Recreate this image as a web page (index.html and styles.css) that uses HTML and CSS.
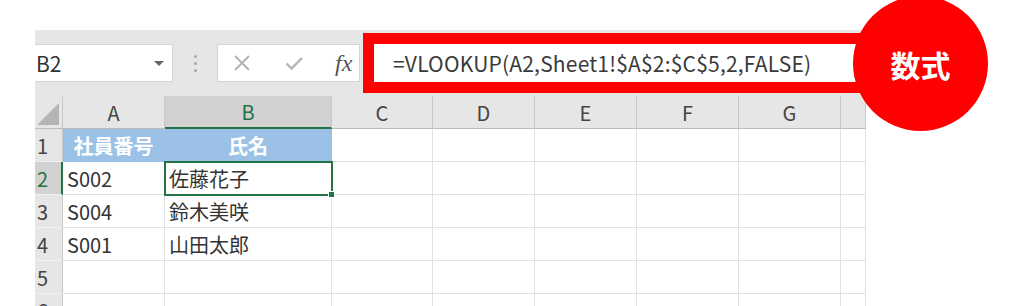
FILE: index.html
```html
<!DOCTYPE html>
<html lang="ja">
<head>
  <meta charset="UTF-8">
  <title>VLOOKUP 数式</title>
  <link rel="stylesheet" href="styles.css">
</head>
<body>
  <div class="sheet">
    <div class="toolbar">
      <div class="namebox">
        <span>B2</span>
        <span class="caret"></span>
      </div>
      <div class="grip"><i></i><i></i><i></i></div>
      <div class="buttons">
        <svg width="18" height="18" viewBox="0 0 18 18"><path d="M2 2L16 16M16 2L2 16" stroke="#b3b3b3" stroke-width="2" fill="none"/></svg>
        <svg width="18" height="18" viewBox="0 0 18 18"><path d="M1.5 9.5L6.5 14.5L17 4" stroke="#b3b3b3" stroke-width="2.4" fill="none"/></svg>
        <span class="fx">fx</span>
      </div>
      <div class="formula">=VLOOKUP(A2,Sheet1!$A$2:$C$5,2,FALSE)</div>
    </div>

    <div class="grid">
      <div class="corner"><span class="tri"></span></div>
      <div class="col">A</div>
      <div class="col active">B</div>
      <div class="col">C</div>
      <div class="col">D</div>
      <div class="col">E</div>
      <div class="col">F</div>
      <div class="col">G</div>
      <div class="col"></div>

      <div class="row">1</div>
      <div class="cell head">社員番号</div>
      <div class="cell head">氏名</div>
      <div class="cell"></div><div class="cell"></div><div class="cell"></div><div class="cell"></div><div class="cell"></div><div class="cell"></div>

      <div class="row active">2</div>
      <div class="cell">S002</div>
      <div class="cell selected">佐藤花子<span class="handle"></span></div>
      <div class="cell"></div><div class="cell"></div><div class="cell"></div><div class="cell"></div><div class="cell"></div><div class="cell"></div>

      <div class="row">3</div>
      <div class="cell">S004</div>
      <div class="cell">鈴木美咲</div>
      <div class="cell"></div><div class="cell"></div><div class="cell"></div><div class="cell"></div><div class="cell"></div><div class="cell"></div>

      <div class="row">4</div>
      <div class="cell">S001</div>
      <div class="cell">山田太郎</div>
      <div class="cell"></div><div class="cell"></div><div class="cell"></div><div class="cell"></div><div class="cell"></div><div class="cell"></div>

      <div class="row">5</div>
      <div class="cell"></div><div class="cell"></div><div class="cell"></div><div class="cell"></div><div class="cell"></div><div class="cell"></div><div class="cell"></div><div class="cell"></div>

      <div class="row">6</div>
      <div class="cell"></div><div class="cell"></div><div class="cell"></div><div class="cell"></div><div class="cell"></div><div class="cell"></div><div class="cell"></div><div class="cell"></div>
    </div>

    <div class="badge">数式</div>
  </div>
</body>
</html>
```

FILE: styles.css
```css
:root {
  --panel: #e6e6e6;
  --line: #e1e1e1;
  --head-line: #c8c8c8;
  --green: #217346;
  --red: #ff0000;
  --text: #333;
}
* { box-sizing: border-box; margin: 0; padding: 0; }
body {
  background: #fff;
  font-family: "Noto Sans CJK JP", "Noto Sans", sans-serif;
  color: var(--text);
  overflow: hidden;
}
.sheet { position: relative; width: 831px; margin: 30px 0 0 35px; }

/* formula bar */
.toolbar { display: flex; align-items: center; height: 66px; background: var(--panel); }
.namebox {
  width: 138px; height: 38px;
  display: flex; align-items: center; justify-content: space-between;
  background: #fff; border: 1px solid #d4d4d4; border-left: none;
  padding: 0 8px 0 1px;
  font-size: 21px; color: #333;
}
.caret { width: 0; height: 0; border-left: 5px solid transparent; border-right: 5px solid transparent; border-top: 5px solid #666; }
.grip { width: 44px; display: flex; flex-direction: column; align-items: center; gap: 4px; }
.grip i { display: block; width: 3px; height: 3px; border-radius: 50%; background: #a6a6a6; }
.buttons {
  width: 143px; height: 38px;
  display: flex; align-items: center; gap: 34px;
  background: #fff; border: 1px solid #d4d4d4;
  padding-left: 15px;
}
.fx { font-family: "Liberation Serif", serif; font-style: italic; font-size: 24px; color: #555; line-height: 1; margin-left: -2px; }
.formula {
  flex: 1; height: 38px; margin: 0 4px 0 14px;
  display: flex; align-items: center;
  background: #fff;
  outline: 11px solid var(--red);
  padding-left: 19px;
  font-size: 21px; letter-spacing: 0.2px; color: #3a3a3a;
}

/* cells */
.grid {
  display: grid;
  grid-template-columns: 28px 102px 167px 101px 102px 102px 102px 102px 25px;
  grid-auto-rows: 33px;
}
.corner, .col, .row { background: var(--panel); }
.corner { border-right: 1px solid var(--head-line); border-bottom: 1px solid #bdbdbd; position: relative; }
.tri { position: absolute; right: 3px; bottom: 3px; width: 0; height: 0; border-left: 22px solid transparent; border-bottom: 22px solid #b5b5b5; }
.col {
  display: flex; align-items: center; justify-content: center;
  border-right: 1px solid var(--head-line); border-bottom: 1px solid #bdbdbd;
  font-size: 20px; color: #444;
}
.col.active { background: #d2d2d2; color: var(--green); border-bottom: 2px solid var(--green); }
.row {
  display: flex; align-items: center; padding-left: 2px;
  border-right: 1px solid var(--head-line); border-bottom: 1px solid #f2f2f2;
  font-size: 20px; color: #444;
}
.row.active { background: #d2d2d2; color: var(--green); border-right: 2px solid var(--green); }
.cell {
  display: flex; align-items: center; padding-left: 4px;
  border-right: 1px solid var(--line); border-bottom: 1px solid var(--line);
  font-size: 20px; color: var(--text); white-space: nowrap;
}
.cell.head { background: #9bc2e6; color: #fff; font-weight: bold; justify-content: center; padding: 0; border-color: #9bc2e6; }
.cell.selected { position: relative; z-index: 1; outline: 2px solid var(--green); outline-offset: -1px; }
.handle { position: absolute; right: -4px; bottom: -4px; width: 7px; height: 7px; background: var(--green); border: 1px solid #fff; }

/* annotation */
.badge {
  position: absolute; left: 818px; top: -34px;
  width: 135px; height: 135px; border-radius: 50%;
  background: var(--red); color: #fff;
  display: flex; align-items: center; justify-content: center;
  font-size: 30px; font-weight: bold;
  z-index: 2;
}
```
